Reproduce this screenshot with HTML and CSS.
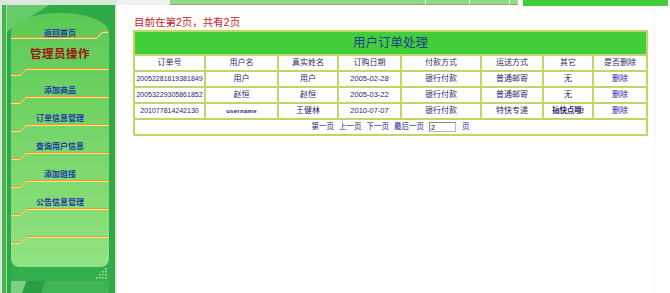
FILE: index.html
```html
<!DOCTYPE html>
<html lang="zh-CN">

<head>
  <meta charset="UTF-8">
  <title>用户订单处理</title>
  <link rel="stylesheet" href="styles.css">
</head>

<body>
  <div class="layout">
    <aside class="sidebar">
      <div class="side-box">
        <div class="side-inner">
          <div class="menu-panel">
            <a class="menu-link first">返回首页</a>
            <svg class="rule rule-top" width="98" height="8" viewBox="0 0 98 8">
              <polyline class="rule-o" points="0,6.5 86,6.5 91,0.5 97,0.5" />
              <polyline class="rule-y" points="0,7.5 86,7.5 91,1.5 97,1.5" />
            </svg>
            <div class="menu-title">管理员操作</div>
            <svg class="rule rule-title" width="98" height="8" viewBox="0 0 98 8">
              <polyline class="rule-o" points="0,6.5 9,6.5 15,0.5 98,0.5" />
              <polyline class="rule-y" points="0,7.5 9,7.5 15,1.5 98,1.5" />
            </svg>
            <a class="menu-link">添加商品</a>
            <svg class="rule" width="98" height="8" viewBox="0 0 98 8">
              <polyline class="rule-o" points="0,6.5 9,6.5 15,0.5 98,0.5" />
              <polyline class="rule-y" points="0,7.5 9,7.5 15,1.5 98,1.5" />
            </svg>
            <a class="menu-link">订单信息管理</a>
            <svg class="rule" width="98" height="8" viewBox="0 0 98 8">
              <polyline class="rule-o" points="0,6.5 9,6.5 15,0.5 98,0.5" />
              <polyline class="rule-y" points="0,7.5 9,7.5 15,1.5 98,1.5" />
            </svg>
            <a class="menu-link">查询用户信息</a>
            <svg class="rule" width="98" height="8" viewBox="0 0 98 8">
              <polyline class="rule-o" points="0,6.5 9,6.5 15,0.5 98,0.5" />
              <polyline class="rule-y" points="0,7.5 9,7.5 15,1.5 98,1.5" />
            </svg>
            <a class="menu-link">添加链接</a>
            <svg class="rule" width="98" height="8" viewBox="0 0 98 8">
              <polyline class="rule-o" points="0,6.5 9,6.5 15,0.5 98,0.5" />
              <polyline class="rule-y" points="0,7.5 9,7.5 15,1.5 98,1.5" />
            </svg>
            <a class="menu-link">公告信息管理</a>
            <svg class="rule" width="98" height="8" viewBox="0 0 98 8">
              <polyline class="rule-o" points="0,6.5 9,6.5 15,0.5 98,0.5" />
              <polyline class="rule-y" points="0,7.5 9,7.5 15,1.5 98,1.5" />
            </svg>
            <span class="menu-link"></span>
            <svg class="rule" width="98" height="8" viewBox="0 0 98 8">
              <polyline class="rule-o" points="0,6.5 9,6.5 15,0.5 98,0.5" />
              <polyline class="rule-y" points="0,7.5 9,7.5 15,1.5 98,1.5" />
            </svg>
          </div>
          <div class="side-dots">
            <svg width="14" height="14" viewBox="0 0 14 14">
              <g fill="#b9eeb0">
                <rect x="10" y="1" width="1.5" height="1.5" />
                <rect x="7" y="4" width="1.5" height="1.5" /><rect x="10" y="4" width="1.5" height="1.5" />
                <rect x="4" y="7" width="1.5" height="1.5" /><rect x="7" y="7" width="1.5" height="1.5" /><rect x="10" y="7" width="1.5" height="1.5" />
                <rect x="1" y="10" width="1.5" height="1.5" /><rect x="4" y="10" width="1.5" height="1.5" /><rect x="7" y="10" width="1.5" height="1.5" /><rect x="10" y="10" width="1.5" height="1.5" />
              </g>
            </svg>
          </div>
          <div class="side-foot"></div>
        </div>
      </div>
    </aside>

    <main class="main">
      <div class="topstrip">
        <span class="ts-blank"></span>
        <span class="ts-tab wide"></span>
        <span class="ts-tab mid"></span>
        <span class="ts-tab small"></span>
        <span class="ts-tab tiny"></span>
        <span class="ts-gap"></span>
        <span class="ts-bar"></span>
      </div>

      <div class="content">
        <p class="page-info">目前在第2页，共有2页</p>

        <table class="orders">
          <colgroup>
            <col style="width:71px">
            <col style="width:73px">
            <col style="width:60px">
            <col style="width:63px">
            <col style="width:80px">
            <col style="width:62px">
            <col style="width:50px">
            <col style="width:54px">
          </colgroup>
          <tr>
            <th colspan="8" class="caption">用户订单处理</th>
          </tr>
          <tr class="head">
            <td>订单号</td>
            <td>用户名</td>
            <td>真实姓名</td>
            <td>订购日期</td>
            <td>付款方式</td>
            <td>运送方式</td>
            <td>其它</td>
            <td>是否删除</td>
          </tr>
          <tr>
            <td class="num">20052281619381849</td>
            <td>用户</td>
            <td>用户</td>
            <td class="date">2005-02-28</td>
            <td>银行付款</td>
            <td>普通邮寄</td>
            <td>无</td>
            <td><a class="del">删除</a></td>
          </tr>
          <tr>
            <td class="num">20053229305861852</td>
            <td>赵恒</td>
            <td>赵恒</td>
            <td class="date">2005-03-22</td>
            <td>银行付款</td>
            <td>普通邮寄</td>
            <td>无</td>
            <td><a class="del">删除</a></td>
          </tr>
          <tr>
            <td class="num">201077814242130</td>
            <td class="tiny">username</td>
            <td>王健林</td>
            <td class="date">2010-07-07</td>
            <td>银行付款</td>
            <td>特快专递</td>
            <td class="note">搞快点哦!</td>
            <td><a class="del">删除</a></td>
          </tr>
          <tr>
            <td colspan="8" class="pager">
              <div class="pager-inner">
                <a>第一页</a>
                <a>上一页</a>
                <a>下一页</a>
                <a>最后一页</a>
                <input type="text" value="2" class="page-box">
                <span>页</span>
              </div>
            </td>
          </tr>
        </table>
      </div>
    </main>
  </div>
</body>

</html>
```

FILE: styles.css
```css
body {
  margin: 0;
  font-family: "Liberation Sans", "Noto Sans CJK SC", sans-serif;
  background-color: #fff;
}

.layout {
  display: flex;
  height: 293px;
  overflow: hidden;
}

/* left menu frame */
.sidebar {
  width: 117px;
  flex: none;
  padding: 5px 2px 0 2px;
  box-sizing: border-box;
  background: linear-gradient(to right, #dde3dd 0, #dde3dd 50%, #d4ead4 50%);
}

.side-box {
  height: 288px;
  border-left: 4px solid #48b44e;
  border-right: 4px solid #34a648;
  box-sizing: border-box;
}

.side-inner {
  height: 100%;
  display: flex;
  flex-direction: column;
  border-left: 1px solid #a6dba6;
  padding: 8px 2px 0 4px;
  box-sizing: border-box;
  background:
    linear-gradient(148deg, #66c96a 0, #66c96a 22px, transparent 23px),
    #2eab49;
}

.menu-panel {
  height: 254px;
  flex: none;
  display: flex;
  flex-direction: column;
  align-items: center;
  border-radius: 49px 49px 8px 8px / 20px 20px 8px 8px;
  background: linear-gradient(#5cc957, #6fd262 35%, #86dc76 75%, #92e283);
}

.menu-link {
  display: block;
  margin-top: 10px;
  height: 10px;
  line-height: 10px;
  font-size: 8px;
  font-weight: bold;
  color: #2438a8;
  text-align: center;
  cursor: pointer;
}

.menu-link.first {
  margin-top: 16px;
}

.menu-title {
  margin-top: 8px;
  height: 14px;
  line-height: 14px;
  font-size: 11.5px;
  font-weight: bold;
  letter-spacing: 0.5px;
  color: #9c1410;
}

.rule {
  display: block;
  flex: none;
}

.rule-top {
  margin-top: -8px;
}

.rule-title {
  margin-top: 7px;
}

.rule-o {
  fill: none;
  stroke: #ee9a2a;
  stroke-width: 1;
}

.rule-y {
  fill: none;
  stroke: #f7e48c;
  stroke-width: 1;
}

.side-dots {
  height: 14px;
  display: flex;
  justify-content: flex-end;
  background-color: #33ae4d;
}

.side-foot {
  flex: 1;
  background:
    linear-gradient(110deg, #7dcf83 0, #7dcf83 14px, #2a9d45 15px, #2a9d45 32px, #3fb556 33px);
}

/* main frame */
.main {
  flex: 1;
  display: flex;
  flex-direction: column;
}

.topstrip {
  display: flex;
  height: 6px;
}

.ts-blank {
  width: 53px;
  height: 5px;
  background-color: #eef1ee;
}

.ts-tab {
  height: 4px;
  background-color: #8edb88;
  border-bottom: 1px solid #a8986c;
  border-right: 1px solid #eef8ee;
}

.ts-tab.wide { width: 255px; }
.ts-tab.mid { width: 43px; }
.ts-tab.small { width: 39px; }
.ts-tab.tiny { width: 8px; border-right: none; }

.ts-gap {
  width: 5px;
}

.ts-bar {
  width: 145px;
  height: 6px;
  background-color: #43cc3a;
}

.content {
  flex: 1;
  padding: 10px 0 0 16px;
  margin-right: 15px;
  border-right: 1px solid #f5f5f5;
}

.page-info {
  margin: 0 0 2px 1px;
  height: 12px;
  line-height: 12px;
  font-size: 10.5px;
  color: #c21c1c;
}

.orders {
  width: 513px;
  table-layout: fixed;
  border-collapse: collapse;
  border: 2px solid #c3d468;
}

.orders td,
.orders th {
  border: 2px solid #c3d468;
  padding: 0;
  height: 14px;
  line-height: 12px;
  font-size: 8px;
  font-weight: normal;
  text-align: center;
  color: #1f1f66;
  white-space: nowrap;
  overflow: hidden;
}

.orders th.caption {
  height: 22px;
  background-color: #42cd3b;
  font-size: 12.5px;
  line-height: 22px;
  color: #1c3d88;
}

.orders .head td {
  color: #2e2e62;
}

.orders td.num {
  font-size: 7px;
}

.orders td.date {
  font-size: 7.5px;
}

.orders td.tiny {
  font-size: 6px;
  font-weight: bold;
  letter-spacing: 0.3px;
}

.orders td.note {
  font-size: 7.5px;
  font-weight: bold;
  letter-spacing: -0.2px;
}

.del {
  color: #2a2a9a;
  cursor: pointer;
}

.orders td.pager {
  height: 14px;
}

.pager-inner {
  display: flex;
  justify-content: center;
  align-items: center;
  gap: 5px;
  font-size: 7.5px;
  color: #26268a;
}

.pager-inner a {
  cursor: pointer;
}

.page-box {
  width: 27px;
  height: 10px;
  padding: 0 1px;
  margin: 0 1px 0 0;
  font-size: 7px;
  font-family: "Liberation Sans", sans-serif;
  border: 1px solid #b8b8b8;
  border-top-color: #888;
  border-left-color: #888;
  box-sizing: border-box;
}
```
